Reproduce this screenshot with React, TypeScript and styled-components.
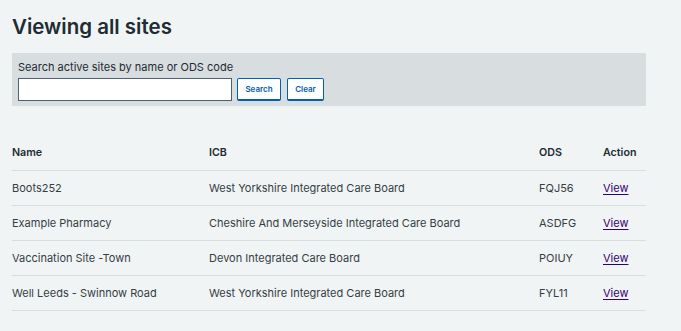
import React from "react";
import styled, { createGlobalStyle } from "styled-components";

const Global = createGlobalStyle`
  html, body { margin: 0; padding: 0; background: #f0f4f5; }
  body { font-family: Inter, "Noto Sans", Arial, sans-serif; color: #212b32; }
`;

const Page = styled.main`
  padding: 13px 0 0 12px;
  width: 634px;
`;

const Title = styled.h1`
  margin: 0;
  font-size: 20.5px;
  line-height: 28px;
  font-weight: 600;
  color: #212b32;
`;

const SearchPanel = styled.form`
  margin-top: 12px;
  background: #d8dde0;
  padding: 6px;
  height: 53px;
  box-sizing: border-box;
`;

const Label = styled.label`
  display: block;
  font-size: 11px;
  line-height: 16px;
  color: #212b32;
  margin-bottom: 3px;
`;

const Row = styled.div`
  display: flex;
  align-items: center;
`;

const Input = styled.input`
  width: 214px;
  height: 23px;
  box-sizing: border-box;
  border: 1px solid #4c6272;
  background: #fff;
  margin: 0 5px 0 0;
  padding: 0 4px;
`;

const Button = styled.button<{ $w: number }>`
  width: ${(p) => p.$w}px;
  height: 23px;
  margin-right: 6px;
  box-sizing: border-box;
  border: 1px solid #005eb8;
  border-bottom-width: 2px;
  border-radius: 2px;
  background: #fff;
  color: #005eb8;
  font-family: Inter, Arial, sans-serif;
  font-size: 8px;
  font-weight: 600;
  padding: 0;
  cursor: pointer;
`;

const Table = styled.table`
  margin-top: 29px;
  width: 634px;
  border-collapse: collapse;
  table-layout: fixed;
  font-size: 11px;
`;

const Th = styled.th<{ $w: number }>`
  width: ${(p) => p.$w}px;
  text-align: left;
  font-weight: 600;
  font-size: 10.7px;
  color: #212b32;
  height: 35px;
  padding: 0;
  border-bottom: 1px solid #d8dde0;
  vertical-align: middle;
`;

const Td = styled.td`
  height: 34px;
  padding: 0;
  color: #353e44;
  border-bottom: 1px solid #d8dde0;
  vertical-align: middle;
`;

const Link = styled.a`
  color: #330072;
  text-decoration: underline;
  text-underline-offset: 1.5px;
`;

const rows = [
  ["Boots252", "West Yorkshire Integrated Care Board", "FQJ56"],
  ["Example Pharmacy", "Cheshire And Merseyside Integrated Care Board", "ASDFG"],
  ["Vaccination Site -Town", "Devon Integrated Care Board", "POIUY"],
  ["Well Leeds - Swinnow Road", "West Yorkshire Integrated Care Board", "FYL11"],
];

export default function App() {
  return (
    <Page>
      <Global />
      <Title>Viewing all sites</Title>
      <SearchPanel onSubmit={(e) => e.preventDefault()}>
        <Label htmlFor="q">Search active sites by name or ODS code</Label>
        <Row>
          <Input id="q" type="text" />
          <Button $w={44}>Search</Button>
          <Button $w={37} type="button">Clear</Button>
        </Row>
      </SearchPanel>
      <Table>
        <thead>
          <tr>
            <Th $w={197}>Name</Th>
            <Th $w={330}>ICB</Th>
            <Th $w={64}>ODS</Th>
            <Th $w={43}>Action</Th>
          </tr>
        </thead>
        <tbody>
          {rows.map((r) => (
            <tr key={r[2]}>
              <Td>{r[0]}</Td>
              <Td>{r[1]}</Td>
              <Td>{r[2]}</Td>
              <Td>
                <Link href="#">View</Link>
              </Td>
            </tr>
          ))}
        </tbody>
      </Table>
    </Page>
  );
}
